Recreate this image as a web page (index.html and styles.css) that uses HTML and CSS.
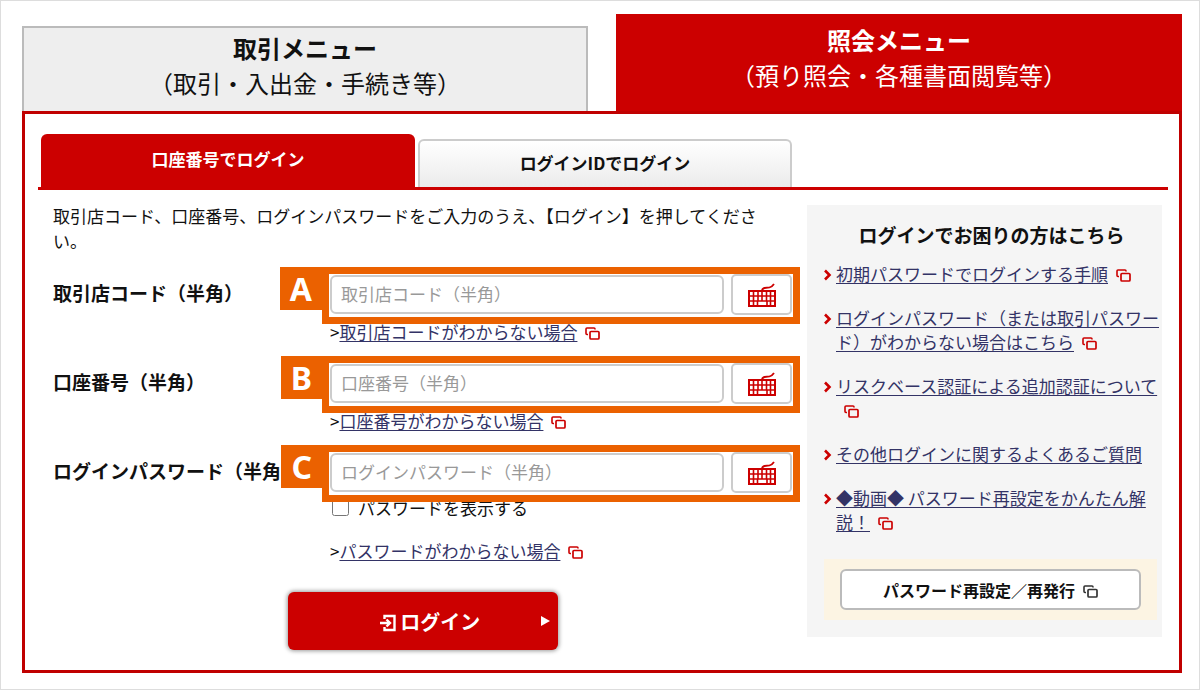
FILE: index.html
```html
<!DOCTYPE html>
<html lang="ja">
<head>
    <meta charset="UTF-8">
    <meta name="viewport" content="width=device-width, initial-scale=1.0">
    <title>照会メニュー ログイン</title>
    <link rel="stylesheet" href="styles.css">
</head>
<body>
    <!-- Shared icons -->
    <svg class="sprite" aria-hidden="true">
        <symbol id="icon-window" viewBox="0 0 15 13">
            <path d="M3 7.500H2q-1 0-1-1V2q0-1 1-1h7q1 0 1 1v.500" fill="none" stroke="currentColor" stroke-width="1.600"/>
            <rect x="5" y="4.500" width="9" height="7.500" rx="1" fill="none" stroke="currentColor" stroke-width="1.700"/>
        </symbol>
        <symbol id="icon-keyboard" viewBox="0 0 28 24">
            <path d="M14 8q0-2.500 2.500-3l5-.600q2.500-.400 4.500-3.400" fill="none" stroke="currentColor" stroke-width="1.800"/>
            <path d="M1 8h26v15H1z" fill="none" stroke="currentColor" stroke-width="2"/>
            <path d="M1 13h26M1 18h26M5.500 8v15M10 8v10M14 8v10M18.500 8v10M22.500 8v15M9.500 18v5M19 18v5" fill="none" stroke="currentColor" stroke-width="1.600"/>
        </symbol>
        <symbol id="icon-arrow" viewBox="0 0 8 12">
            <path d="M1 1.500L5.500 6L1 10.500" fill="none" stroke="currentColor" stroke-width="2.600"/>
        </symbol>
    </svg>

    <div class="page">
        <!-- Main menu -->
        <nav class="menu">
            <a href="#" class="menu-item"><strong>取引メニュー</strong><br>（取引・入出金・手続き等）</a>
            <a href="#" class="menu-item active"><strong>照会メニュー</strong><br>（預り照会・各種書面閲覧等）</a>
        </nav>

        <main class="panel">
            <div class="tabs">
                <button type="button" class="tab active">口座番号でログイン</button>
                <button type="button" class="tab">ログインIDでログイン</button>
            </div>

            <div class="content">
                <!-- Login form -->
                <form class="login-form">
                    <p class="lead">取引店コード、口座番号、ログインパスワードをご入力のうえ、【ログイン】を押してください。</p>

                    <div class="row">
                        <label for="branch">取引店コード（半角）</label>
                        <div class="field">
                            <div class="frame">
                                <span class="badge">A</span>
                                <input type="text" id="branch" placeholder="取引店コード（半角）">
                                <button type="button" class="key-btn" aria-label="キーボード"><svg><use href="#icon-keyboard"/></svg></button>
                            </div>
                            <p class="help">&gt;<a href="#">取引店コードがわからない場合</a><svg class="window"><use href="#icon-window"/></svg></p>
                        </div>
                    </div>

                    <div class="row">
                        <label for="account">口座番号（半角）</label>
                        <div class="field">
                            <div class="frame">
                                <span class="badge">B</span>
                                <input type="text" id="account" placeholder="口座番号（半角）">
                                <button type="button" class="key-btn" aria-label="キーボード"><svg><use href="#icon-keyboard"/></svg></button>
                            </div>
                            <p class="help">&gt;<a href="#">口座番号がわからない場合</a><svg class="window"><use href="#icon-window"/></svg></p>
                        </div>
                    </div>

                    <div class="row">
                        <label for="password">ログインパスワード（半角</label>
                        <div class="field">
                            <div class="frame">
                                <span class="badge">C</span>
                                <input type="password" id="password" placeholder="ログインパスワード（半角）">
                                <button type="button" class="key-btn" aria-label="キーボード"><svg><use href="#icon-keyboard"/></svg></button>
                            </div>
                            <div class="show-password">
                                <input type="checkbox" id="show">
                                <label for="show">パスワードを表示する</label>
                            </div>
                            <p class="help">&gt;<a href="#">パスワードがわからない場合</a><svg class="window"><use href="#icon-window"/></svg></p>
                        </div>
                    </div>

                    <div class="submit">
                        <button type="submit" class="submit-btn">
                            <svg class="enter" viewBox="0 0 16 18"><path d="M4.500 5V2h10v14h-10v-3M0 9h10M6.500 5.500L10 9l-3.500 3.500" fill="none" stroke="currentColor" stroke-width="2.400"/></svg>
                            ログイン
                            <svg class="go" viewBox="0 0 9 10"><path d="M0 0l9 5-9 5z" fill="currentColor"/></svg>
                        </button>
                    </div>
                </form>

                <!-- Help links -->
                <aside class="trouble">
                    <h2>ログインでお困りの方はこちら</h2>
                    <ul>
                        <li><svg class="arrow"><use href="#icon-arrow"/></svg><div><a href="#">初期パスワードでログインする手順</a><svg class="window"><use href="#icon-window"/></svg></div></li>
                        <li><svg class="arrow"><use href="#icon-arrow"/></svg><div><a href="#">ログインパスワード（または取引パスワード）がわからない場合はこちら</a><svg class="window"><use href="#icon-window"/></svg></div></li>
                        <li><svg class="arrow"><use href="#icon-arrow"/></svg><div><a href="#">リスクベース認証による追加認証について</a><svg class="window"><use href="#icon-window"/></svg></div></li>
                        <li><svg class="arrow"><use href="#icon-arrow"/></svg><div><a href="#">その他ログインに関するよくあるご質問</a></div></li>
                        <li><svg class="arrow"><use href="#icon-arrow"/></svg><div><a href="#">◆動画◆ パスワード再設定をかんたん解説！</a><svg class="window"><use href="#icon-window"/></svg></div></li>
                    </ul>
                    <div class="reset">
                        <button type="button" class="reset-btn">パスワード再設定／再発行<svg class="window"><use href="#icon-window"/></svg></button>
                    </div>
                </aside>
            </div>
        </main>
    </div>
</body>
</html>
```

FILE: styles.css
```css
* {
    box-sizing: border-box;
}
body {
    margin: 0;
    font-family: "Noto Sans CJK JP", sans-serif;
    font-size: 17px;
    line-height: 25px;
    color: #111;
    background-color: white;
}
button, input {
    font-family: inherit;
    font-size: 17px;
}
button {
    padding: 0;
    cursor: pointer;
}
p, h2, ul {
    margin: 0;
    padding: 0;
}
a {
    color: #333366;
    text-decoration: underline;
    text-underline-offset: 2px;
    text-decoration-thickness: 1px;
}
.sprite {
    position: absolute;
    width: 0;
    height: 0;
}
.page {
    min-height: 100vh;
    padding: 13px 17px 16px 21px;
    border: 1px solid #ddd;
}

/* Main menu */
.menu {
    display: grid;
    grid-template-columns: 1fr 1fr;
    align-items: end;
    gap: 28px;
}
.menu-item {
    padding: 2px 0 11px;
    background-color: #eee;
    border: 2px solid #bbb;
    border-bottom: none;
    font-size: 24px;
    line-height: 35px;
    text-align: center;
    text-decoration: none;
    color: #111;
}
.menu-item.active {
    padding: 8px 0 19px;
    background-color: #c00;
    border: none;
    color: white;
}
.panel {
    padding: 20px 11px 20px 13px;
    border: 3px solid #c00000;
}

/* Login type tabs */
.tabs {
    display: flex;
    align-items: flex-end;
    gap: 3px;
    padding-left: 3px;
    border-bottom: 3px solid #c00;
}
.tab {
    width: 374px;
    height: 48px;
    padding-bottom: 4px;
    border: 2px solid #ccc;
    border-bottom: none;
    border-radius: 6px 6px 0 0;
    background: linear-gradient(#fff, #ebebeb);
    font-weight: bold;
    color: #111;
}
.tab.active {
    height: 53px;
    border: none;
    background: #c00;
    color: white;
}
.content {
    display: flex;
    align-items: flex-start;
    gap: 7px;
    padding: 13px 6px 0 15px;
}

/* Form */
.login-form {
    flex: 1;
}
.lead {
    padding-right: 20px;
    margin-bottom: 14px;
}
.row {
    display: grid;
    grid-template-columns: 269px 1fr;
    margin-bottom: 16px;
}
.row > label {
    padding-top: 13px;
    font-size: 19px;
    font-weight: bold;
    white-space: nowrap;
}
.frame {
    position: relative;
    z-index: 1;
    display: flex;
    align-items: center;
    gap: 7px;
    height: 57px;
    padding: 0 1px 2px;
    border: 7px solid #eb6100;
    background-color: white;
}
.badge {
    position: absolute;
    top: -7px;
    right: 100%;
    height: 43px;
    padding: 0 17px 0 10px;
    background-color: #eb6100;
    color: white;
    font-family: "Noto Sans", sans-serif;
    font-size: 32px;
    font-weight: bold;
    line-height: 43px;
}
.frame input {
    flex: 1;
    min-width: 0;
    height: 39px;
    padding: 0 9px 3px;
    border: 2px solid #ccc;
    border-radius: 6px;
}
.frame input::placeholder {
    color: #999;
}
.key-btn {
    display: flex;
    align-items: center;
    justify-content: center;
    width: 61px;
    height: 41px;
    border: 2px solid #ccc;
    border-radius: 5px;
    background-color: white;
    color: #c00;
}
.key-btn svg {
    width: 28px;
    height: 24px;
}
.help {
    margin-top: -1px;
    padding-left: 8px;
    line-height: 17px;
}
.window {
    width: 15px;
    height: 13px;
    margin-left: 8px;
    vertical-align: -1px;
    color: #c00;
}
.show-password {
    display: flex;
    align-items: center;
    gap: 9px;
    height: 20px;
    margin: -5px 0 26px;
    padding-left: 10px;
}
.show-password input {
    width: 17px;
    height: 17px;
    margin: 0;
}
.submit {
    margin-top: 33px;
    padding-right: 8px;
    text-align: center;
}
.submit-btn {
    position: relative;
    width: 270px;
    height: 58px;
    padding-left: 15px;
    border: none;
    border-radius: 6px;
    background-color: #c00;
    box-shadow: 0 0 4px 1px rgba(0,0,0,0.4);
    color: white;
    font-size: 20px;
    font-weight: bold;
}
.enter {
    width: 16px;
    height: 18px;
    vertical-align: -2px;
}
.go {
    position: absolute;
    top: 24px;
    right: 8px;
    width: 9px;
    height: 10px;
}

/* Help box */
.trouble {
    width: 355px;
    margin-top: 2px;
    padding: 17px 3px 17px 17px;
    background-color: #f5f5f5;
}
.trouble h2 {
    margin-bottom: 15px;
    font-size: 19px;
    line-height: 25px;
    text-align: center;
}
.trouble ul {
    display: grid;
    gap: 20px;
    list-style: none;
}
.trouble li {
    display: flex;
    gap: 4px;
    line-height: 24px;
}
.arrow {
    flex: none;
    width: 8px;
    height: 12px;
    margin-top: 7px;
    color: #c00;
}
.reset {
    margin: 25px 2px 0 0;
    padding: 10px 16px;
    background-color: #fcf4e3;
}
.reset-btn {
    width: 100%;
    height: 41px;
    border: 2px solid #bbb;
    border-radius: 6px;
    background-color: white;
    color: #111;
    font-size: 16px;
    font-weight: bold;
}
.reset-btn .window {
    color: #333;
}
```
